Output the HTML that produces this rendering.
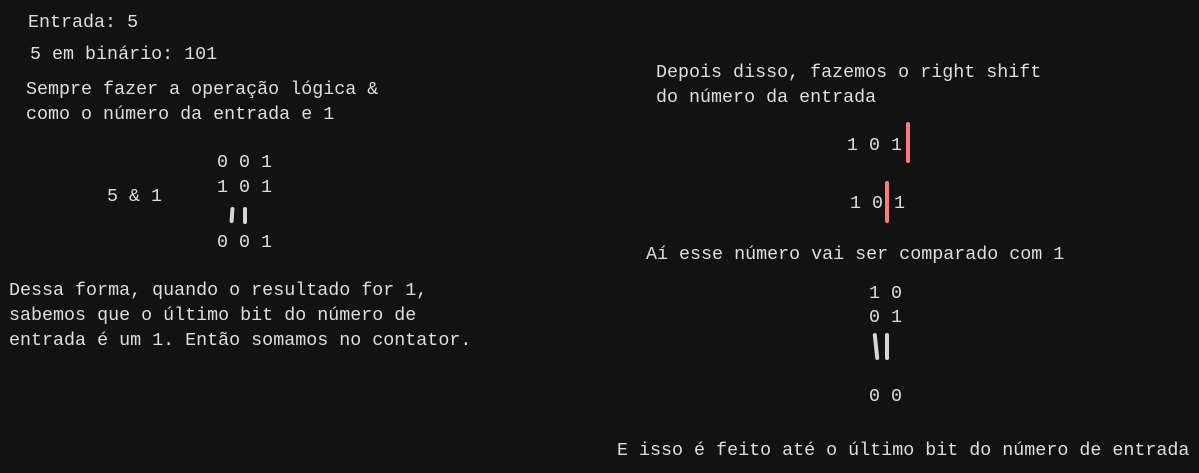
<!DOCTYPE html>
<html><head><meta charset="utf-8"><style>
html,body{margin:0;padding:0;}
body{width:1199px;height:473px;background:#121212;position:relative;overflow:hidden;font-family:"Liberation Mono",monospace;font-size:18.35px;color:#dedede;}
.t{position:absolute;line-height:25px;white-space:pre;}
.r{position:absolute;background:#ff7b7b;border-radius:3px;width:4px;}
.g{position:absolute;background:#d6d6d6;border-radius:3px;width:4px;}
</style></head><body>
<div class="t" style="left:28px;top:10px">Entrada: 5</div>
<div class="t" style="left:30px;top:42px">5 em binário: 101</div>
<div class="t" style="left:26px;top:77px">Sempre fazer a operação lógica &amp;
como o número da entrada e 1</div>
<div class="t" style="left:217px;top:150px">0 0 1</div>
<div class="t" style="left:217px;top:175px">1 0 1</div>
<div class="g" style="left:230px;top:207px;height:16px;transform:rotate(4deg)"></div>
<div class="g" style="left:243px;top:207px;height:17px"></div>
<div class="t" style="left:217px;top:230px">0 0 1</div>
<div class="t" style="left:107px;top:184px">5 &amp; 1</div>
<div class="t" style="left:9px;top:278px">Dessa forma, quando o resultado for 1,
sabemos que o último bit do número de
entrada é um 1. Então somamos no contator.</div>
<div class="t" style="left:656px;top:60px">Depois disso, fazemos o right shift
do número da entrada</div>
<div class="t" style="left:847px;top:133px">1 0 1</div>
<div class="r" style="left:906px;top:122px;height:41px"></div>
<div class="t" style="left:850px;top:191px">1 0</div>
<div class="r" style="left:885px;top:181px;height:42px"></div>
<div class="t" style="left:894px;top:191px">1</div>
<div class="t" style="left:646px;top:242px">Aí esse número vai ser comparado com 1</div>
<div class="t" style="left:869px;top:281px">1 0</div>
<div class="t" style="left:869px;top:305px">0 1</div>
<div class="g" style="left:874px;top:333px;height:27px;transform:rotate(-6deg)"></div>
<div class="g" style="left:885px;top:333px;height:27px"></div>
<div class="t" style="left:869px;top:384px">0 0</div>
<div class="t" style="left:617px;top:438px">E isso é feito até o último bit do número de entrada</div>
</body></html>
